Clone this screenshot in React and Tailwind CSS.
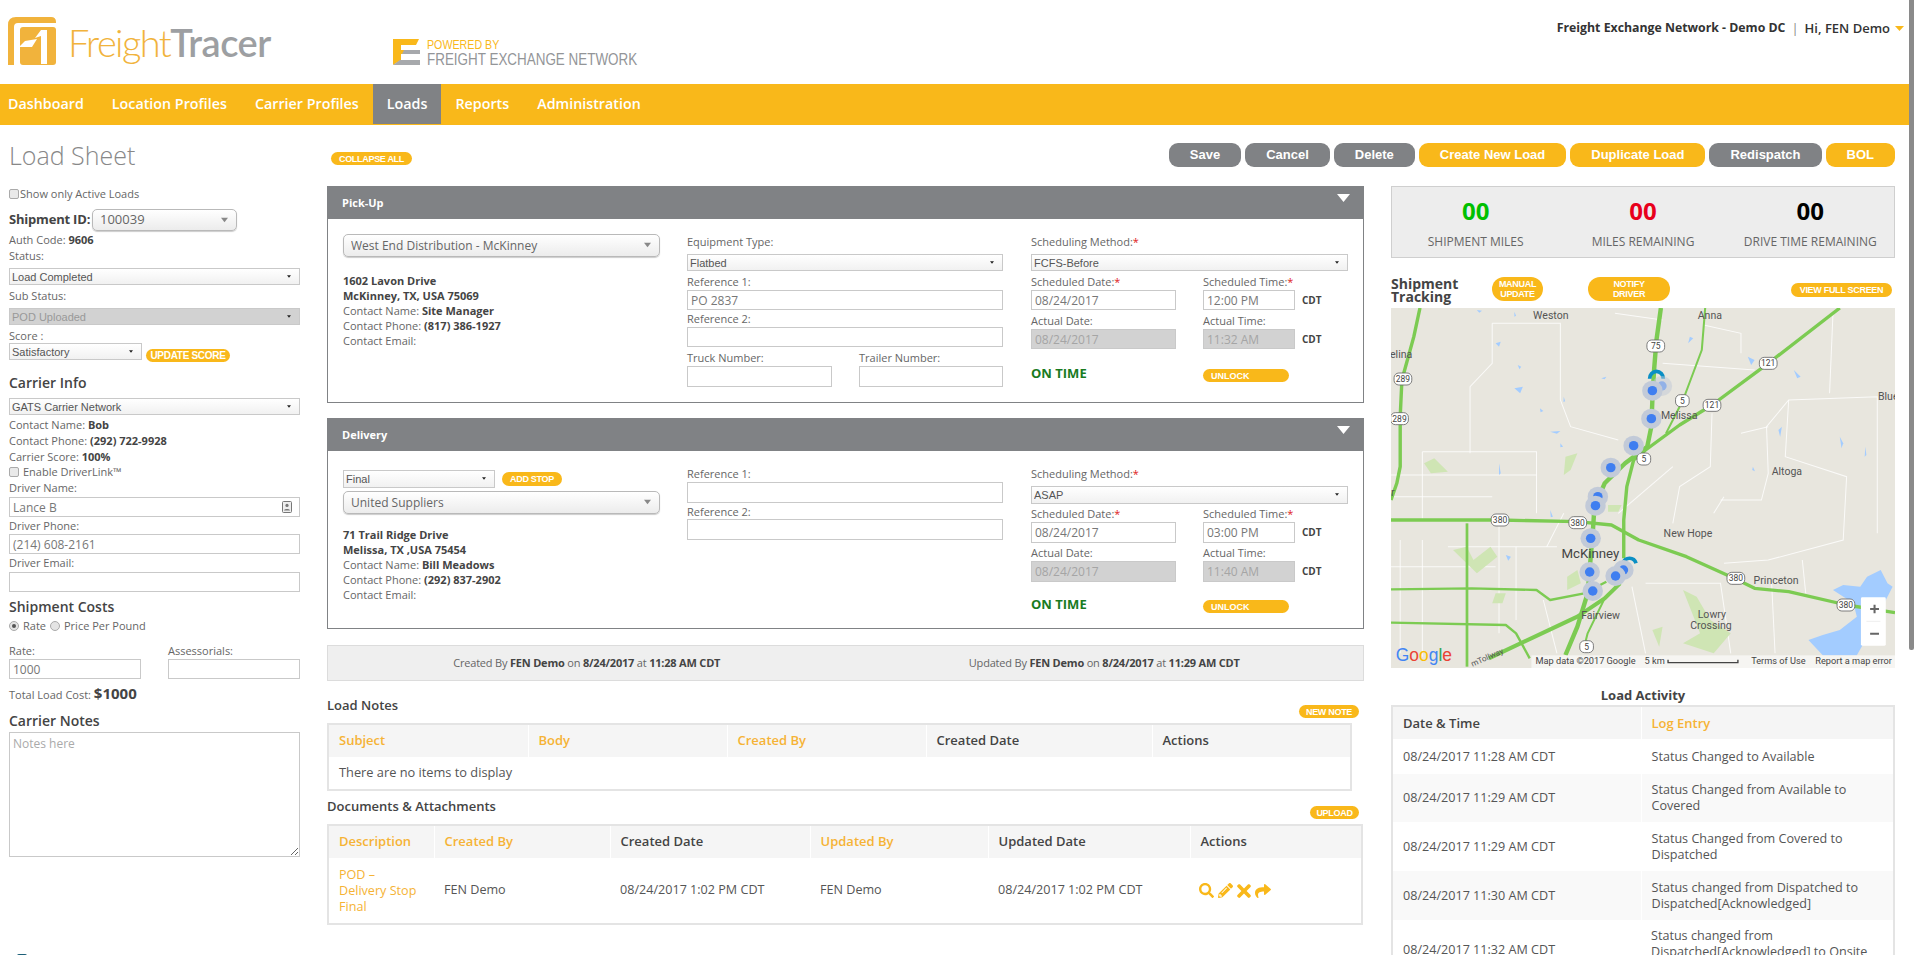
import { FaSearch, FaPencilAlt, FaTimes, FaShare } from 'react-icons/fa'

const NAV = ['Dashboard', 'Location Profiles', 'Carrier Profiles', 'Loads', 'Reports', 'Administration']

function Pill({ children, className = '' }) {
  return (
    <button className={`bg-[#f9b81a] text-white rounded-full font-['Liberation_Sans',sans-serif] font-bold text-[9px] leading-[10px] uppercase tracking-[-0.3px] shrink-0 ${className}`}>
      {children}
    </button>
  )
}

function ActionBtn({ label, gray }) {
  return (
    <button className={`h-[24px] px-[21px] rounded-[9px] text-white font-['Liberation_Sans',sans-serif] font-bold text-[13px] ${gray ? 'bg-[#808285]' : 'bg-[#f9b81a]'}`}>
      {label}
    </button>
  )
}

function Label({ children, req, className = '' }) {
  return (
    <div className={`h-[14px] leading-[14px] text-[11px] text-[#666] whitespace-nowrap ${className}`}>
      {children}
      {req && <span className="text-[#e02020]">*</span>}
    </div>
  )
}

function Caret({ className = '' }) {
  return (
    <svg viewBox="0 0 6 4" className={`absolute pointer-events-none ${className}`}>
      <path d="M0 0h6L3 4z" fill="currentColor" />
    </svg>
  )
}

// small square select used all over the form
function Select({ value, h = 'h-[17px]', w = 'w-full', disabled, className = '' }) {
  return (
    <div className={`relative ${h} ${w} ${className}`}>
      <select
        disabled={disabled}
        defaultValue={value}
        className={`appearance-none w-full h-full border border-[#c9c9c9] pl-[2px] text-[11px] font-['Liberation_Sans',sans-serif] outline-none block ${disabled ? 'bg-[#d2d2d2] text-[#999]' : 'bg-gradient-to-b from-white to-[#f1f1f1] text-[#555]'}`}
      >
        <option>{value}</option>
      </select>
      <Caret className="right-[9px] top-[7px] w-[4px] h-[3px] text-[#222]" />
    </div>
  )
}

// the big rounded one
function RoundSelect({ value, w = 'w-full', h = 'h-[23px]', size = 'text-[12px]', pl = 'pl-[7px]', right = 'right-[9px]' }) {
  return (
    <div className={`relative ${w} ${h}`}>
      <select
        defaultValue={value}
        className={`appearance-none w-full h-full rounded-[5px] border border-[#b9b9b9] ${pl} ${size} text-[#666] bg-gradient-to-b from-white to-[#ececec] shadow-[0_1px_1px_rgba(0,0,0,.2)] outline-none block`}
      >
        <option>{value}</option>
      </select>
      <Caret className={`${right} top-[8px] w-[7px] h-[6px] text-[#888]`} />
    </div>
  )
}

function Input({ value = '', placeholder, h = 'h-[20px]', w = 'w-full', disabled, className = '' }) {
  return (
    <input
      readOnly
      value={value}
      placeholder={placeholder}
      className={`block border border-[#c9c9c9] px-[3px] text-[12px] outline-none ${h} ${w} ${disabled ? 'bg-[#d2d2d2] text-[#a5a5a5]' : 'bg-white text-[#777]'} ${className}`}
    />
  )
}

function Info({ label, value }) {
  return (
    <div className="h-[14px] leading-[14px] text-[11px] text-[#666] whitespace-nowrap">
      {label} <b className="font-bold text-[#444]">{value}</b>
    </div>
  )
}

function Heading({ children, className = '' }) {
  return <div className={`h-[16px] leading-[16px] text-[14px] font-semibold text-[#444] whitespace-nowrap ${className}`}>{children}</div>
}

function Address({ lines, name, phone, className = '' }) {
  return (
    <div className={`text-[11px] leading-[15px] text-[#666] ${className}`}>
      {lines.map(l => <div key={l} className="font-bold text-[#444]">{l}</div>)}
      <div>Contact Name: <b className="text-[#444]">{name}</b></div>
      <div>Contact Phone: <b className="text-[#444]">{phone}</b></div>
      <div>Contact Email:</div>
    </div>
  )
}

function Panel({ title, bodyH, children, className = '' }) {
  return (
    <div className={`border border-[#808285] ${className}`}>
      <div className="h-[32px] bg-[#808285] flex justify-between pl-[14px] pr-[13px]">
        <span className="text-white text-[11px] font-bold leading-[31px]">{title}</span>
        <svg viewBox="0 0 13 8" className="w-[13px] h-[8px] mt-[7px]"><path d="M0 0h13L6.5 8z" fill="#fff" /></svg>
      </div>
      <div className={`flex pl-[15px] ${bodyH}`}>{children}</div>
    </div>
  )
}

function OnTimeRow({ className = '' }) {
  return (
    <div className={`flex ${className}`}>
      <div className="w-[172px] h-[15px] leading-[15px] text-[13px] font-bold text-[#197b1f]">ON TIME</div>
      <Pill className="w-[86px] h-[13px] mt-[3px] text-left pl-[8px] text-[9.5px] tracking-normal">Unlock</Pill>
    </div>
  )
}

function DateRow({ l1, l2, v1, v2, dis, mt, inH }) {
  return (
    <>
      <div className={`flex ${mt}`}>
        <Label req={!dis} className="w-[172px]">{l1}</Label>
        <Label req={!dis}>{l2}</Label>
      </div>
      <div className="flex items-center mt-[1px]">
        <Input value={v1} h={inH} w="w-[145px]" disabled={dis} />
        <Input value={v2} h={inH} w="w-[92px]" disabled={dis} className="ml-[27px]" />
        <span className="ml-[7px] text-[10px] font-bold text-[#444]">CDT</span>
      </div>
    </>
  )
}

function Schedule({ method, date, time, actualDate, actualTime, inH, selH, gaps }) {
  return (
    <div className="w-[317px] ml-[28px]">
      <Label req className="mt-[16px]">Scheduling Method:</Label>
      <Select value={method} h={selH} className="mt-[5px]" />
      <DateRow l1="Scheduled Date:" l2="Scheduled Time:" v1={date} v2={time} mt={gaps[0]} inH={inH} />
      <DateRow l1="Actual Date:" l2="Actual Time:" v1={actualDate} v2={actualTime} dis mt={gaps[1]} inH={inH} />
      <OnTimeRow className={gaps[2]} />
    </div>
  )
}

function Logo() {
  return (
    <div className="flex w-[327px] pl-[8px] pt-[17px]">
      <svg viewBox="0 0 48 48" className="w-[48px] h-[48px] shrink-0">
        <path d="M0 48V8Q0 0 8 0H43Q48 0 48 5V6H10Q6 6 6 10V48Z" fill="#f1b33c" />
        <rect x="12" y="10" width="36" height="38" rx="3" fill="#f1b33c" />
        <path d="M33 13h6v34h-6V19l-6 2z" fill="#fff" />
        <path d="M11 30l6-6 12-2-5 8z" fill="#fff" />
      </svg>
      <div className="ml-[12px] mt-[1px] h-[48px] leading-[48px] text-[38px] font-['Lato',sans-serif] whitespace-nowrap">
        <span className="font-light text-[#f1b33c] tracking-[-1.6px]">Freight</span>
        <span className="font-semibold text-[#9d9fa2] tracking-[-0.5px]">Tracer</span>
      </div>
    </div>
  )
}

function PoweredBy() {
  return (
    <div className="flex ml-[66px] pt-[39px]">
      <svg viewBox="0 0 27 26" className="w-[27px] h-[26px] shrink-0">
        <path d="M0 0h26l-3 6H8v5h12l-5 4H8v6l-8 5z" fill="#f9b81a" />
        <path d="M11 11h16v4H9zM7 21h20v5H0z" fill="#a7a9ac" />
      </svg>
      <div className="ml-[7px] font-['Liberation_Sans',sans-serif] whitespace-nowrap origin-left scale-x-[.79]">
        <div className="text-[13.5px] leading-[12px] text-[#f9b81a]">POWERED BY</div>
        <div className="text-[17px] leading-[16px] mt-[1px] text-[#939598]">FREIGHT EXCHANGE NETWORK</div>
      </div>
    </div>
  )
}

function Header() {
  return (
    <div className="h-[84px] flex">
      <Logo />
      <PoweredBy />
      <div className="ml-auto pr-[5px] pt-[20px] h-[36px] leading-[16px] text-[13px] text-[#333] whitespace-nowrap flex items-start">
        <span className="font-bold text-[12.3px]">Freight Exchange Network - Demo DC</span>
        <span className="mx-[6px] text-[#888]">|</span>
        <span className="font-semibold">Hi, FEN Demo</span>
        <svg viewBox="0 0 9 5" className="w-[9px] h-[5px] ml-[5px] mt-[6px]"><path d="M0 0h9L4.5 5z" fill="#f9b81a" /></svg>
      </div>
    </div>
  )
}

function Nav() {
  return (
    <div className="h-[41px] bg-[#f9b81a] flex pl-[8px]">
      {NAV.map((n, i) => (
        <div
          key={n}
          className={`h-[40px] leading-[39px] text-[14.3px] font-semibold text-white whitespace-nowrap ${i === 0 ? 'pr-[14px]' : 'px-[14px]'} ${n === 'Loads' ? 'bg-[#808285]' : ''}`}
        >
          {n}
        </div>
      ))}
    </div>
  )
}

function LeftColumn() {
  return (
    <div className="w-[327px] shrink-0 pl-[9px] pr-[27px] flex flex-col">
      <h1 className="mt-[12px] h-[36px] leading-[36px] text-[25px] font-light text-[#888]">Load Sheet</h1>
      <label className="mt-[14px] h-[14px] flex items-center text-[11px] text-[#666]">
        <span className="w-[10px] h-[10px] border border-[#aaa] rounded-[2px] bg-[#e9e9e9] mr-[1px]" />
        Show only Active Loads
      </label>
      <div className="mt-[8px] flex items-center h-[22px]">
        <span className="text-[13px] font-bold tracking-[-0.2px] text-[#444] whitespace-nowrap w-[83px]">Shipment ID:</span>
        <RoundSelect value="100039" w="w-[145px]" h="h-[22px]" size="text-[13px]" pl="pl-[7px]" />
      </div>
      <div className="mt-[2px]"><Info label="Auth Code:" value="9606" /></div>
      <Label className="mt-[2px]">Status:</Label>
      <Select value="Load Completed" className="mt-[5px]" />
      <Label className="mt-[4px]">Sub Status:</Label>
      <Select value="POD Uploaded" disabled className="mt-[5px]" />
      <Label className="mt-[4px]">Score :</Label>
      <div className="flex items-start">
        <Select value="Satisfactory" w="w-[133px]" />
        <Pill className="w-[84px] h-[13px] ml-[4px] mt-[6px] text-[10px]">Update Score</Pill>
      </div>
      <Heading className="mt-[13px]">Carrier Info</Heading>
      <Select value="GATS Carrier Network" className="mt-[7px]" />
      <div className="mt-[3px]"><Info label="Contact Name:" value="Bob" /></div>
      <div className="mt-[2px]"><Info label="Contact Phone:" value="(292) 722-9928" /></div>
      <div className="mt-[2px]"><Info label="Carrier Score:" value="100%" /></div>
      <label className="mt-[1px] h-[14px] flex items-center text-[11px] text-[#666]">
        <span className="w-[10px] h-[10px] border border-[#aaa] rounded-[2px] bg-[#e9e9e9] mr-[4px]" />
        Enable DriverLink™
      </label>
      <Label className="mt-[2px]">Driver Name:</Label>
      <div className="relative mt-[2px]">
        <Input value="Lance B" />
        <svg viewBox="0 0 10 12" className="absolute right-[8px] top-[4px] w-[10px] h-[12px]">
          <rect x=".5" y=".5" width="9" height="11" rx="1" fill="#eee" stroke="#777" />
          <circle cx="5" cy="4.4" r="1.6" fill="#777" />
          <path d="M2 9.5c0-2 6-2 6 0z" fill="#777" />
        </svg>
      </div>
      <Label className="mt-[2px]">Driver Phone:</Label>
      <Input value="(214) 608-2161" className="mt-[1px]" />
      <Label className="mt-[2px]">Driver Email:</Label>
      <Input className="mt-[2px]" />
      <Heading className="mt-[7px]">Shipment Costs</Heading>
      <div className="mt-[4px] h-[14px] flex items-center text-[11px] text-[#666]">
        <span className="w-[10px] h-[10px] rounded-full border border-[#aaa] bg-[#e4e4e4] flex items-center justify-center mr-[4px]">
          <span className="w-[4px] h-[4px] rounded-full bg-[#555]" />
        </span>
        Rate
        <span className="w-[10px] h-[10px] rounded-full border border-[#aaa] bg-[#e4e4e4] mx-[4px]" />
        Price Per Pound
      </div>
      <div className="mt-[11px] flex">
        <Label className="w-[159px]">Rate:</Label>
        <Label>Assessorials:</Label>
      </div>
      <div className="mt-[1px] flex justify-between">
        <Input value="1000" w="w-[132px]" />
        <Input w="w-[132px]" />
      </div>
      <div className="mt-[4px] h-[20px] leading-[20px] text-[11px] text-[#666]">
        Total Load Cost: <b className="text-[15px] text-[#444]">$1000</b>
      </div>
      <Heading className="mt-[10px]">Carrier Notes</Heading>
      <textarea
        readOnly
        placeholder="Notes here"
        className="mt-[3px] h-[125px] w-full border border-[#c9c9c9] px-[3px] py-[2px] text-[12px] outline-none placeholder:text-[#aaa] block"
      />
      <div className="mt-[97px] ml-[8px] w-[10px] h-[2px] bg-[#1d5f78] rounded-t-full" />
    </div>
  )
}

function PickUp() {
  return (
    <Panel title="Pick-Up" bodyH="h-[183px]">
      <div className="w-[317px]">
        <div className="mt-[15px]"><RoundSelect value="West End Distribution - McKinney" /></div>
        <Address lines={['1602 Lavon Drive', 'McKinney, TX, USA 75069']} name="Site Manager" phone="(817) 386-1927" className="mt-[16px]" />
      </div>
      <div className="w-[316px] ml-[27px]">
        <Label className="mt-[16px]">Equipment Type:</Label>
        <Select value="Flatbed" className="mt-[5px]" />
        <Label className="mt-[4px]">Reference 1:</Label>
        <Input value="PO 2837" className="mt-[1px]" />
        <Label className="mt-[2px]">Reference 2:</Label>
        <Input className="mt-[1px]" />
        <div className="mt-[4px] flex">
          <Label className="w-[172px]">Truck Number:</Label>
          <Label>Trailer Number:</Label>
        </div>
        <div className="mt-[1px] flex justify-between">
          <Input w="w-[145px]" h="h-[21px]" />
          <Input w="w-[144px]" h="h-[21px]" />
        </div>
      </div>
      <Schedule
        method="FCFS-Before" date="08/24/2017" time="12:00 PM" actualDate="08/24/2017" actualTime="11:32 AM"
        inH="h-[20px]" selH="h-[17px]" gaps={['mt-[4px]', 'mt-[4px]', 'mt-[17px]']}
      />
    </Panel>
  )
}

function Delivery() {
  return (
    <Panel title="Delivery" bodyH="h-[177px]" className="mt-[15px]">
      <div className="w-[317px]">
        <div className="mt-[19px] flex items-start">
          <Select value="Final" w="w-[152px]" h="h-[18px]" />
          <Pill className="w-[60px] h-[14px] ml-[7px] mt-[2px]">Add Stop</Pill>
        </div>
        <div className="mt-[3px]"><RoundSelect value="United Suppliers" /></div>
        <Address lines={['71 Trail Ridge Drive', 'Melissa, TX ,USA 75454']} name="Bill Meadows" phone="(292) 837-2902" className="mt-[13px]" />
      </div>
      <div className="w-[316px] ml-[27px]">
        <Label className="mt-[16px]">Reference 1:</Label>
        <Input h="h-[21px]" className="mt-[1px]" />
        <Label className="mt-[2px]">Reference 2:</Label>
        <Input h="h-[21px]" />
      </div>
      <Schedule
        method="ASAP" date="08/24/2017" time="03:00 PM" actualDate="08/24/2017" actualTime="11:40 AM"
        inH="h-[21px]" selH="h-[18px]" gaps={['mt-[3px]', 'mt-[3px]', 'mt-[15px]']}
      />
    </Panel>
  )
}

function Meta({ who, label, date, time }) {
  return (
    <div className="text-center text-[11px] text-[#666] tracking-[-0.2px]">
      {label} By <b className="text-[#444]">{who}</b> on <b className="text-[#444]">{date}</b> at <b className="text-[#444]">{time}</b>
    </div>
  )
}

function Th({ children, link, w }) {
  return (
    <th className={`h-[33px] pl-[10px] text-left text-[13px] font-semibold bg-[#f5f5f5] border-r border-white ${w} ${link ? 'text-[#f5b335]' : 'text-[#444]'}`}>
      {children}
    </th>
  )
}

function LoadNotes() {
  return (
    <>
      <div className="mt-[16px] flex justify-between h-[26px]">
        <span className="h-[16px] leading-[16px] text-[13px] font-semibold text-[#444]">Load Notes</span>
        <Pill className="w-[60px] h-[13px] mt-[8px] mr-[5px]">New Note</Pill>
      </div>
      <table className="table-fixed w-[1025px] border-2 border-[#e4e4e4] border-collapse">
        <thead>
          <tr>
            <Th link w="w-[200px]">Subject</Th>
            <Th link w="w-[199px]">Body</Th>
            <Th link w="w-[199px]">Created By</Th>
            <Th w="w-[226px]">Created Date</Th>
            <Th>Actions</Th>
          </tr>
        </thead>
        <tbody>
          <tr><td colSpan={5} className="h-[33px] pl-[10px] text-[12.8px] text-[#555]">There are no items to display</td></tr>
        </tbody>
      </table>
    </>
  )
}

function Documents() {
  return (
    <>
      <div className="mt-[7px] flex justify-between h-[26px]">
        <span className="h-[16px] leading-[16px] text-[13px] font-semibold text-[#444]">Documents &amp; Attachments</span>
        <Pill className="w-[49px] h-[13px] mt-[8px] mr-[5px]">Upload</Pill>
      </div>
      <table className="table-fixed w-[1036px] border-2 border-[#e4e4e4] border-collapse">
        <thead>
          <tr>
            <Th link w="w-[106px]">Description</Th>
            <Th link w="w-[176px]">Created By</Th>
            <Th w="w-[200px]">Created Date</Th>
            <Th link w="w-[178px]">Updated By</Th>
            <Th w="w-[202px]">Updated Date</Th>
            <Th>Actions</Th>
          </tr>
        </thead>
        <tbody>
          <tr className="text-[12.6px] text-[#555]">
            <td className="h-[66px] pl-[10px] leading-[16px] text-[#f5b335]">POD –<br />Delivery Stop<br />Final</td>
            <td className="pl-[10px]">FEN Demo</td>
            <td className="pl-[10px]">08/24/2017 1:02 PM CDT</td>
            <td className="pl-[10px]">FEN Demo</td>
            <td className="pl-[10px]">08/24/2017 1:02 PM CDT</td>
            <td className="pl-[9px]">
              <div className="flex items-center text-[#f9b81a]">
                <FaSearch size={15} />
                <FaPencilAlt size={15} className="ml-[4px]" />
                <FaTimes size={20} className="ml-[1px]" />
                <FaShare size={16} className="ml-[1px]" />
              </div>
            </td>
          </tr>
        </tbody>
      </table>
    </>
  )
}

function Stat({ value, label, color }) {
  return (
    <div className="flex-1 text-center">
      <div className={`mt-[9px] h-[30px] leading-[30px] text-[24px] font-bold ${color}`}>{value}</div>
      <div className="mt-[9px] text-[12px] leading-[14px] text-[#666]">{label}</div>
    </div>
  )
}

const ROADS = [
  ['M118 24L100 110L65 240L60 350L60 500L50 550L33 600', 10],
  ['M825 24L812 120L805 210L800 300L797 380L785 440L720 490L660 550L630 620L625 700L610 880L580 980L545 1065', 13],
  ['M1350 24L1140 190L975 315L880 375L780 450L745 480L725 560L716 660L716 775', 10],
  ['M955 24L945 150L890 300L840 400', 6],
  ['M33 660L350 660L580 665L680 675L760 720L900 770L1040 835L1100 865L1200 875L1370 915L1512 938', 10],
  ['M256 670L256 1100', 8],
  ['M33 868L270 865L460 870L500 900L600 880L665 845', 7],
  ['M33 968L370 975L400 1000L440 1075', 7],
  ['M320 1075L580 950L660 895L705 850', 12],
  ['M660 895L610 1000L600 1040', 6],
]

const STREETS = [
  'M330 70L530 70L530 300L560 380L700 420', 'M330 70L330 190L265 260L265 460', 'M125 455L460 455L460 640', 'M125 455L125 660', 'M33 525L460 525',
  'M33 590L330 590', 'M350 660L350 1000', 'M125 720L125 1070', 'M33 800L340 800', 'M490 740L540 640', 'M1000 600L1120 600L1140 520L1135 380L1200 300L1460 290L1460 700',
  'M1200 300L1190 470L1370 530L1360 720L1140 780L1010 790', 'M975 340L970 500L880 560L860 670', 'M1010 590L980 640', 'M1330 40L1320 280', 'M830 190L1100 210', 'M950 75L1060 100L1060 160',
  'M780 850L1000 850L1030 1060', 'M1150 850L1160 1060', 'M690 40L830 60', 'M740 860L780 1060', 'M200 740L520 740', 'M60 720L60 1060', 'M400 740L400 960', 'M480 900L520 1060',
  'M1060 400L1140 380', 'M860 500L700 640', 'M1240 780L1250 880',
]

const LAKES = [
  'M1330 870L1360 855L1410 860L1430 830L1470 810L1490 850L1505 860L1470 930L1440 960L1420 1030L1400 1066L1300 1066L1258 1020L1300 1005L1350 990L1400 950L1390 910Z',
  'M395 265l25 -5l-8 20z', 'M500 395l30 -2l-10 8z', 'M1080 170l20 10l-10 15z', 'M1215 210l20 20l-10 5z', 'M1350 410l10 20l-5 15z', 'M1170 390l10 -10l-5 30z',
  'M340 130l15 -5l-5 15z', 'M650 235l15 -5l-5 8z', 'M910 110l10 5l-15 15z', 'M350 490l5 30l-5 5z', 'M1425 440l3 25l-5 5z', 'M285 30l15 2l-8 6z', 'M395 35l5 12l-5 3z',
  'M405 195l10 5l-5 8z', 'M540 290l4 14l-5 2z', 'M470 325l10 8l-8 4z', 'M530 430l8 10l-8 2z', 'M370 765l15 5l-8 12z', 'M500 630l8 20l-6 2z', 'M1095 500l6 14l-8 -4z',
]

const PARKS = [
  'M130 490l30 -15l40 40l-50 5z', 'M545 470l35 -10l-20 50l-20 15z', 'M215 750l40 -10l20 40l50 -40l20 30l-60 50z', 'M890 870l40 20l40 70l60 40l-50 60l-90 -30l50 -30z',
  'M670 615h40l-10 20h-30z', 'M550 830l30 -20l10 40l-40 20z', 'M340 880h30l-10 30h-30z', 'M800 990l30 -10l-10 60z',
]

const MARKERS = [[828, 258, .5], [800, 272], [797, 356], [745, 437], [678, 503], [640, 590], [633, 617], [619, 715], [616, 816], [715, 810], [692, 828], [625, 873]]

const SHIELDS = [
  [810, 138, '75'], [1140, 190, '121'], [975, 316, '121'], [888, 302, '5'], [775, 477, '5'], [607, 1040, '5'],
  [68, 237, '289'], [58, 356, '289'], [353, 660, '380'], [581, 668, '380'], [1045, 835, '380'], [1368, 915, '380'],
]

const PLACES = [
  [450, 58, 'Weston'], [933, 58, 'Anna'], [10, 174, 'Celina'], [1462, 299, 'Blue'], [825, 356, 'Melissa'], [1150, 526, 'Altoga'],
  [833, 712, 'New Hope'], [1097, 852, 'Princeton'], [591, 957, 'Fairview'], [933, 955, 'Lowry'], [911, 987, 'Crossing'],
]

function TrackingMap() {
  return (
    <svg viewBox="33 24 1479 1080" preserveAspectRatio="none" className="block w-[504px] h-[360px] bg-[#e8e6de] font-['Roboto',sans-serif]">
      {STREETS.map((d, i) => <path key={i} d={d} fill="none" stroke="#fff" strokeWidth="3" opacity=".8" />)}
      {PARKS.map((d, i) => <path key={i} d={d} fill="#cfe5b4" />)}
      {LAKES.map((d, i) => <path key={i} d={d} fill="#a3ccff" />)}
      {ROADS.map(([d, w], i) => <path key={i} d={d} fill="none" stroke="#7ccb52" strokeWidth={w} strokeLinejoin="round" />)}
      {SHIELDS.map(([x, y, t], i) => (
        <g key={i}>
          <rect x={x - (t.length > 1 ? 26 : 20)} y={y - 18} width={t.length > 1 ? 52 : 40} height="36" rx="14" fill="#fff" stroke="#666" strokeWidth="2.5" />
          <text x={x} y={y + 9} textAnchor="middle" fontSize="25" fill="#444">{t}</text>
        </g>
      ))}
      {PLACES.map(([x, y, t]) => <text key={t} x={x} y={y} fontSize="31" fill="#555">{t}</text>)}
      <text x="533" y="773" fontSize="39" fill="#444">McKinney</text>
      <text x="33" y="588" fontSize="31" fill="#555">r</text>
      <text x="272" y="1100" fontSize="24" fill="#555" transform="rotate(-24 272 1100)">mTollway</text>
      <path d="M792 236a20 22 0 0 1 40 0" fill="none" stroke="#0a8fc4" strokeWidth="11" />
      <path d="M714 790a20 22 0 0 1 38 0" fill="none" stroke="#0a8fc4" strokeWidth="11" />
      {MARKERS.map(([x, y, o = 1], i) => (
        <g key={i} opacity={o}>
          <circle cx={x} cy={y} r="30" fill="#c2cad8" />
          <circle cx={x} cy={y} r="14" fill="#3f7ef0" />
        </g>
      ))}
      <rect x="445" y="1066" width="1067" height="38" fill="#fff" opacity=".6" />
      <text x="457" y="1091" fontSize="27" fill="#444">Map data ©2017 Google</text>
      <text x="777" y="1091" fontSize="27" fill="#444">5 km</text>
      <path d="M846 1079v9h205v-9" fill="none" stroke="#444" strokeWidth="4" />
      <text x="1090" y="1091" fontSize="27" fill="#444">Terms of Use</text>
      <text x="1278" y="1091" fontSize="27" fill="#444">Report a map error</text>
      <text x="47" y="1082" fontSize="54" fontWeight="500" fontFamily="Liberation Sans, sans-serif" textLength="165" lengthAdjust="spacingAndGlyphs">
        <tspan fill="#4285f4">G</tspan><tspan fill="#ea4335">o</tspan><tspan fill="#fbbc05">o</tspan><tspan fill="#4285f4">g</tspan><tspan fill="#34a853">l</tspan><tspan fill="#ea4335">e</tspan>
      </text>
      <rect x="1412" y="892" width="73" height="145" rx="4" fill="#fff" />
      <path d="M1428 964h41" stroke="#e6e6e6" strokeWidth="2" />
      <path d="M1452 914v26M1439 927h26M1439 1001h26" stroke="#666" strokeWidth="6" />
    </svg>
  )
}

function RightColumn() {
  return (
    <div className="w-[504px] ml-[27px] shrink-0">
      <div className="h-[72px] bg-[#ededed] border border-[#cfcfcf] flex">
        <Stat value="00" label="SHIPMENT MILES" color="text-[#00c000]" />
        <Stat value="00" label="MILES REMAINING" color="text-[#e8001c]" />
        <Stat value="00" label="DRIVE TIME REMAINING" color="text-black" />
      </div>
      <div className="h-[50px] flex items-start">
        <div className="w-[101px] mt-[19px] text-[14px] leading-[13px] font-bold text-[#444]">Shipment Tracking</div>
        <Pill className="w-[51px] h-[24px] mt-[19px]">Manual Update</Pill>
        <Pill className="w-[82px] h-[24px] mt-[19px] ml-[45px]">Notify<br />Driver</Pill>
        <Pill className="w-[101px] h-[14px] mt-[25px] ml-auto mr-[3px]">View Full Screen</Pill>
      </div>
      <TrackingMap />
      <div className="mt-[19px] h-[16px] leading-[16px] text-center text-[13px] font-bold text-[#444]">Load Activity</div>
      <table className="mt-[2px] table-fixed w-[504px] border-2 border-[#e4e4e4] border-collapse text-[12.6px] leading-[16px] text-[#555]">
        <thead>
          <tr>
            <Th w="w-[249px]">Date &amp; Time</Th>
            <Th link>Log Entry</Th>
          </tr>
        </thead>
        <tbody>
          {[
            ['08/24/2017 11:28 AM CDT', 'Status Changed to Available', 'h-[35px]'],
            ['08/24/2017 11:29 AM CDT', 'Status Changed from Available to Covered', 'h-[48px] bg-[#f9f9f9]'],
            ['08/24/2017 11:29 AM CDT', 'Status Changed from Covered to Dispatched', 'h-[49px]'],
            ['08/24/2017 11:30 AM CDT', 'Status changed from Dispatched to Dispatched[Acknowledged]', 'h-[49px] bg-[#f9f9f9]'],
          ].map(([d, t, c], i) => (
            <tr key={i} className={c}>
              <td className="pl-[10px] border-r border-white">{d}</td>
              <td className="pl-[10px] pr-[8px]">{t}</td>
            </tr>
          ))}
          <tr className="h-[60px]">
            <td className="pl-[10px]">08/24/2017 11:32 AM CDT</td>
            <td className="pl-[10px] pr-[8px] align-top pt-[8px]">Status changed from Dispatched[Acknowledged] to Onsite</td>
          </tr>
        </tbody>
      </table>
    </div>
  )
}

export default function App() {
  return (
    <div className="h-[955px] w-[1914px] overflow-hidden flex bg-white font-['Open_Sans',sans-serif]">
      <div className="w-[1909px] shrink-0">
        <Header />
        <Nav />
        <div className="flex">
          <LeftColumn />
          <div className="w-[1568px] shrink-0">
            <div className="h-[61px] flex justify-between">
              <Pill className="w-[81px] h-[13px] mt-[27px] ml-[4px]">Collapse All</Pill>
              <div className="flex gap-[4px] pt-[18px] items-start">
                <ActionBtn label="Save" gray />
                <ActionBtn label="Cancel" gray />
                <ActionBtn label="Delete" gray />
                <ActionBtn label="Create New Load" />
                <ActionBtn label="Duplicate Load" />
                <ActionBtn label="Redispatch" gray />
                <ActionBtn label="BOL" />
              </div>
            </div>
            <div className="flex">
              <div className="w-[1037px] shrink-0">
                <PickUp />
                <Delivery />
                <div className="mt-[16px] h-[36px] bg-[#efefef] border border-[#dcdcdc] grid grid-cols-2 items-center">
                  <Meta label="Created" who="FEN Demo" date="8/24/2017" time="11:28 AM CDT" />
                  <Meta label="Updated" who="FEN Demo" date="8/24/2017" time="11:29 AM CDT" />
                </div>
                <LoadNotes />
                <Documents />
              </div>
              <RightColumn />
            </div>
          </div>
        </div>
      </div>
      <div className="w-[5px]">
        <div className="h-[650px] bg-[#8a8a8a] rounded-b-[2px]" />
      </div>
    </div>
  )
}
